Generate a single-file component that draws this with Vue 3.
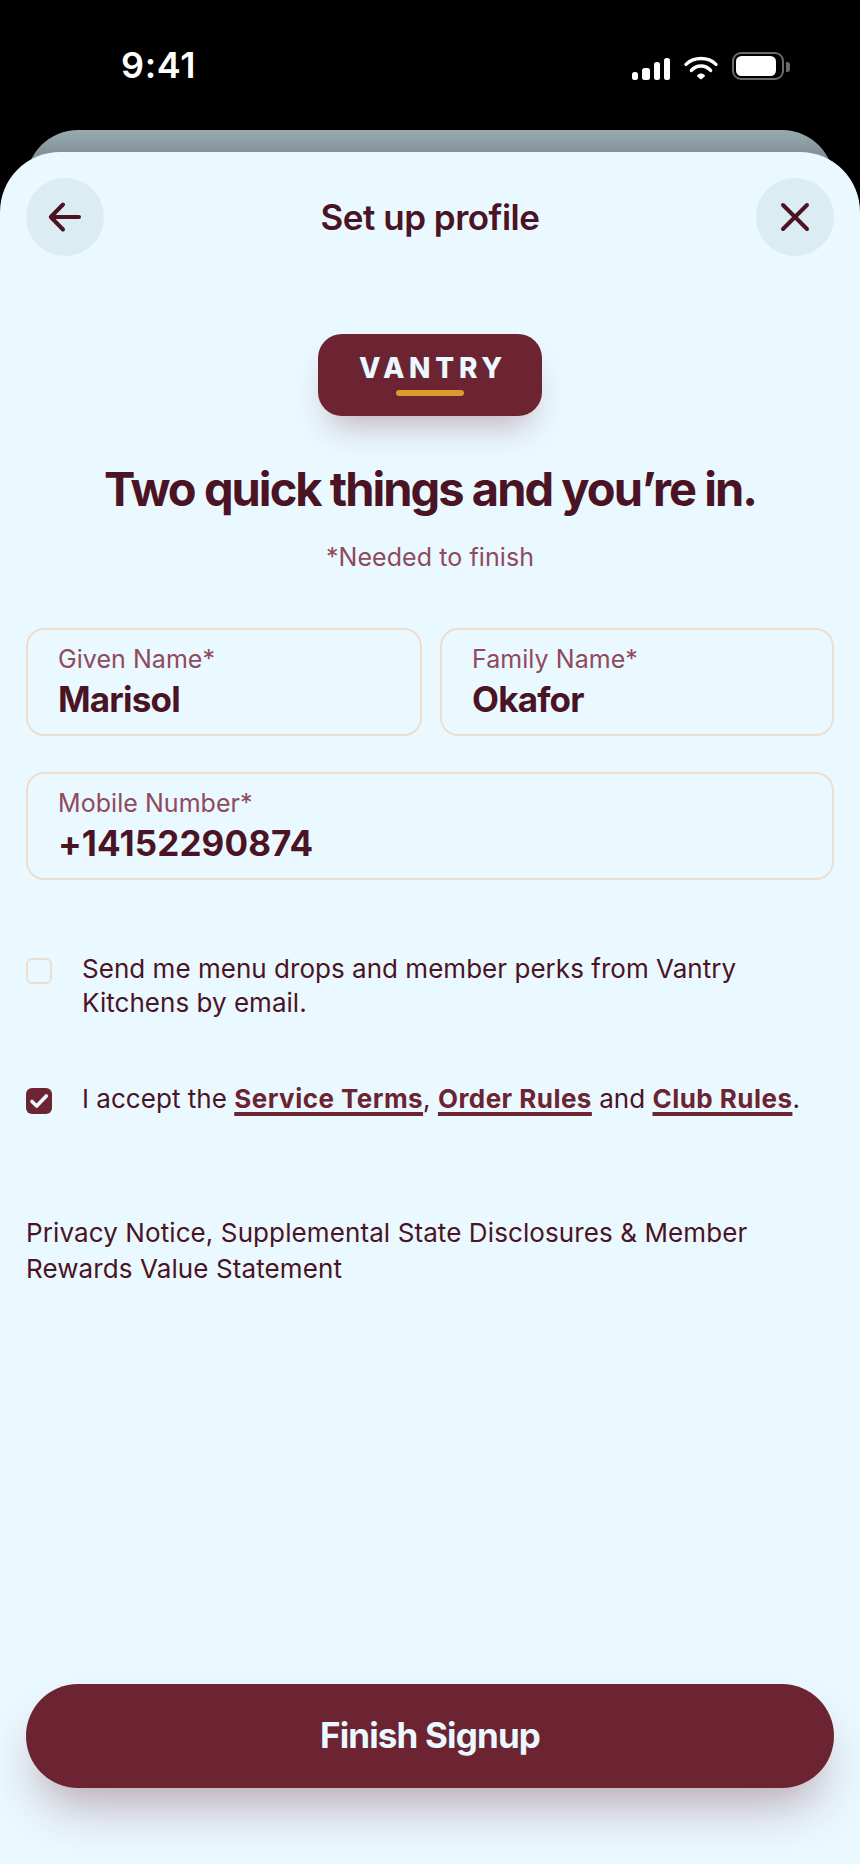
<template>
  <div class="screen">
    <header class="status-bar">
      <span class="status-time">9:41</span>
      <svg class="status-icons" viewBox="0 0 160 30" width="160" height="30">
        <!-- Signal -->
        <g fill="#fff">
          <rect x="2" y="21" width="6" height="8" rx="2.5"/>
          <rect x="12" y="17" width="8" height="12" rx="2.5"/>
          <rect x="24" y="11" width="6" height="18" rx="2.5"/>
          <rect x="34" y="7" width="6" height="22" rx="2.5"/>
        </g>
        <!-- Wifi -->
        <g fill="none" stroke="#fff" stroke-width="3.4" stroke-linecap="round">
          <path d="M 56 13.4 C 64 5.6 78 5.6 86 13.4"/>
          <path d="M 61.4 19.4 C 66.5 13.5 75.5 13.5 80.6 19.4"/>
        </g>
        <path d="M 67.2 24.2 C 69.4 21.9 72.6 21.9 74.8 24.2 C 75.2 24.7 75 25.1 74.6 25.5 L 71.8 28 C 71.3 28.4 70.7 28.4 70.2 28 L 67.4 25.5 C 67 25.1 66.8 24.7 67.2 24.2 Z" fill="#fff"/>
        <!-- Battery -->
        <rect x="103" y="2" width="50" height="26" rx="8" fill="none" stroke="#6a6a6a" stroke-width="2"/>
        <rect x="106" y="5" width="40" height="20" rx="5.5" fill="#fff"/>
        <path d="M 156 11 H 157 Q 160 11 160 14 V 18 Q 160 21 157 21 H 156 Z" fill="#6a6a6a"/>
      </svg>
    </header>

    <div class="back-sheet"></div>

    <main class="sheet">
      <nav class="nav">
        <button class="nav-btn" aria-label="Back">
          <svg viewBox="0 0 78 78" width="78" height="78">
            <path d="M 53 39 H 25 M 37 26.5 L 24.8 39 L 37 51.5"/>
          </svg>
        </button>
        <h1 class="nav-title">Set up profile</h1>
        <button class="nav-btn" aria-label="Close">
          <svg viewBox="0 0 78 78" width="78" height="78">
            <path d="M 27 27 L 51 51 M 51 27 L 27 51"/>
          </svg>
        </button>
      </nav>

      <div class="brand">
        <span class="brand-name">VANTRY</span>
        <i class="brand-bar"></i>
      </div>

      <h2 class="headline">Two quick things and you’re in.</h2>
      <p class="hint">*Needed to finish</p>

      <div class="fields">
        <label v-for="f in fields" :key="f.label" class="field" :class="{ wide: f.wide }">
          <span class="field-label">{{ f.label }}*</span>
          <span class="field-value">{{ f.value }}</span>
        </label>
      </div>

      <div class="check-row" @click="emails = !emails">
        <span class="check" :class="{ on: emails }">
          <svg v-if="emails" viewBox="0 0 26 26" width="26" height="26"><path d="M 6 13.5 L 10.7 18 L 20.3 8"/></svg>
        </span>
        <p class="check-text">Send me menu drops and member perks from Vantry Kitchens by email.</p>
      </div>

      <div class="check-row terms" @click="accepted = !accepted">
        <span class="check" :class="{ on: accepted }">
          <svg v-if="accepted" viewBox="0 0 26 26" width="26" height="26"><path d="M 6 13.5 L 10.7 18 L 20.3 8"/></svg>
        </span>
        <p class="check-text">I accept the <a>Service Terms</a>, <a>Order Rules</a> and <a>Club Rules</a>.</p>
      </div>

      <p class="legal">Privacy Notice, Supplemental State Disclosures &amp; Member Rewards Value Statement</p>

      <button class="submit">Finish Signup</button>
    </main>
  </div>
</template>

<script setup>
import { ref } from 'vue'

const fields = [
  { label: 'Given Name', value: 'Marisol' },
  { label: 'Family Name', value: 'Okafor' },
  { label: 'Mobile Number', value: '+14152290874', wide: true },
]

const emails = ref(false)
const accepted = ref(true)
</script>

<style>
body { margin: 0; background: #000; }
</style>

<style scoped>
.screen {
  width: 860px; height: 1864px; box-sizing: border-box; overflow: hidden;
  display: flex; flex-direction: column;
  background: #000; color: #4a1424; font-family: Inter, "Liberation Sans", sans-serif;
}
h1, h2, p { margin: 0; }
button { border: 0; padding: 0; font-family: inherit; }

.status-bar {
  height: 130px; flex: none; box-sizing: border-box; padding: 43px 70px 0 121px;
  display: flex; justify-content: space-between; align-items: flex-start;
}
.status-time { color: #fff; font-size: 36px; line-height: 44px; font-weight: 600; letter-spacing: 0.6px; }
.status-icons { margin-top: 8px; }

.back-sheet {
  flex: none; height: 70px; margin: 0 26px -48px; border-radius: 52px 52px 0 0;
  background: linear-gradient(#98aab0, #839298 24px);
}
.sheet {
  flex: 1; position: relative; box-sizing: border-box; padding: 26px 26px 76px;
  display: flex; flex-direction: column;
  background: #eaf8ff; border-radius: 60px 60px 0 0;
}

.nav { display: flex; align-items: center; justify-content: space-between; }
.nav-btn { width: 78px; height: 78px; border-radius: 50%; background: #dcecf3; }
.nav-btn svg { display: block; fill: none; stroke: #4a1424; stroke-width: 4; stroke-linecap: round; stroke-linejoin: round; }
.nav-title { font-size: 35px; line-height: 44px; font-weight: 600; letter-spacing: -0.5px; }

.brand {
  width: 224px; height: 82px; margin: 78px auto 0; box-sizing: border-box; padding-top: 17px;
  display: flex; flex-direction: column; align-items: center;
  border-radius: 24px; background: #6d2432; box-shadow: 0 20px 32px -12px rgba(109, 36, 50, 0.34);
}
.brand-name { color: #eaf8ff; font-size: 28px; line-height: 34px; font-weight: 800; letter-spacing: 4.7px; margin-right: -6px; }
.brand-bar { width: 68px; height: 6px; margin-top: 5px; border-radius: 3px; background: #d99a2e; }

.headline { margin-top: 44px; text-align: center; font-size: 47px; line-height: 58px; font-weight: 700; letter-spacing: -1.96px; }
.hint { margin-top: 23px; text-align: center; font-size: 25px; line-height: 32px; color: #8f4a5c; letter-spacing: 0.08px; }

.fields { display: grid; grid-template-columns: 396fr 394fr; gap: 36px 18px; margin-top: 55px; }
.field {
  height: 108px; box-sizing: border-box; padding: 13px 30px 0; display: flex; flex-direction: column;
  border: 2px solid #eddfd0; border-radius: 18px;
}
.field.wide { grid-column: 1 / -1; }
.field-label { font-size: 25px; line-height: 32px; color: #8f4a5c; letter-spacing: 0.05px; }
.field-value { margin-top: 2px; font-size: 35px; line-height: 44px; font-weight: 700; letter-spacing: -0.8px; }
.wide .field-value { letter-spacing: 0.12px; }

.check-row { display: flex; align-items: flex-start; gap: 30px; margin-top: 72px; }
.check-row.terms { margin-top: 62px; }
.check { flex: none; width: 26px; height: 26px; margin-top: 6px; box-sizing: border-box; border: 2px solid #eddfd0; border-radius: 6px; }
.check.on { border: 0; background: #6d2432; }
.check svg { display: block; fill: none; stroke: #eaf8ff; stroke-width: 3.6; stroke-linecap: round; stroke-linejoin: round; }
.check-text { font-size: 26px; line-height: 34px; letter-spacing: 0.03px; }
.check-text a { color: #6d2432; font-weight: 700; letter-spacing: 0.45px; text-decoration: underline; text-decoration-thickness: 4px; text-underline-offset: 4px; text-decoration-skip-ink: none; }

.legal { margin-top: 99px; font-size: 26px; line-height: 36px; letter-spacing: 0.1px; }

.submit {
  height: 104px; margin-top: auto; padding-bottom: 2px; border-radius: 52px; background: #6d2432; color: #eaf8ff;
  font-size: 35px; line-height: 44px; font-weight: 700; letter-spacing: -0.85px;
  box-shadow: 0 28px 48px -12px rgba(109, 36, 50, 0.38);
}
</style>
